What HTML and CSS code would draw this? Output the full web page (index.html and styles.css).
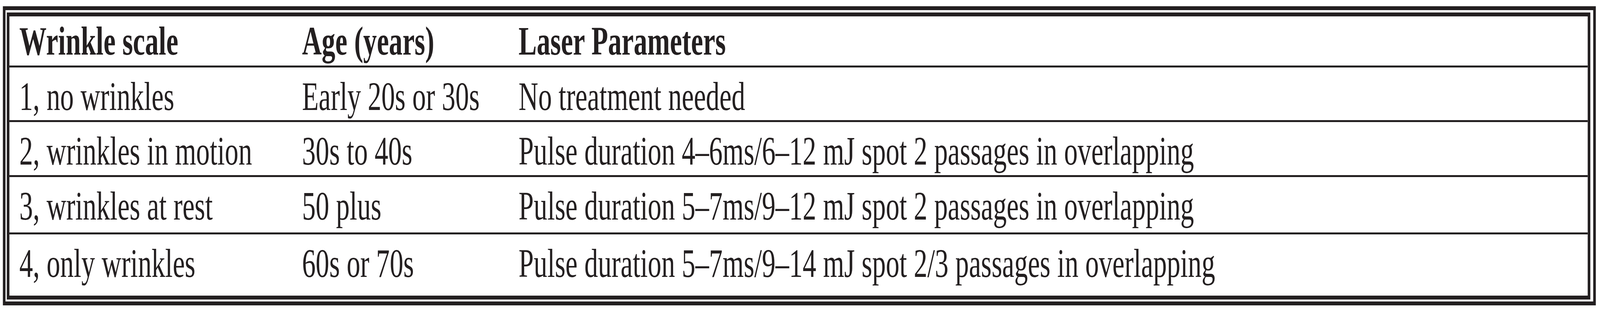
FILE: index.html
```html
<!DOCTYPE html>
<html lang="en">
<head>
<meta charset="utf-8">
<title>Wrinkle scale</title>
<link rel="stylesheet" href="styles.css">
</head>
<body>
<div class="viewport">
  <div class="page">
    <div class="frame">
      <div class="table">
        <div class="row head">
          <div class="cell">Wrinkle scale</div>
          <div class="cell">Age (years)</div>
          <div class="cell">Laser Parameters</div>
        </div>
        <div class="row r1">
          <div class="cell">1, no wrinkles</div>
          <div class="cell">Early 20s or 30s</div>
          <div class="cell">No treatment needed</div>
        </div>
        <div class="row r2">
          <div class="cell">2, wrinkles in motion</div>
          <div class="cell">30s to 40s</div>
          <div class="cell">Pulse duration 4–6ms/6–12 mJ spot 2 passages in overlapping</div>
        </div>
        <div class="row r3">
          <div class="cell">3, wrinkles at rest</div>
          <div class="cell">50 plus</div>
          <div class="cell">Pulse duration 5–7ms/9–12 mJ spot 2 passages in overlapping</div>
        </div>
        <div class="row r4">
          <div class="cell">4, only wrinkles</div>
          <div class="cell">60s or 70s</div>
          <div class="cell">Pulse duration 5–7ms/9–14 mJ spot 2/3 passages in overlapping</div>
        </div>
      </div>
    </div>
  </div>
</div>
</body>
</html>
```
FILE: styles.css
```css
html, body {
  margin: 0;
  padding: 0;
  background: #ffffff;
}
body {
  font-family: "Liberation Serif", "Times New Roman", serif;
  font-size: 104px;
  line-height: 115px;
  color: #231f20;
}
.viewport {
  width: 100%;
  height: 800px;
  overflow: hidden;
}
.page {
  width: 6118px;
  padding-top: 16px;
  transform-origin: 0 0;
}
@media (max-width: 6117px) {
  .page {
    transform: scaleX(0.66950);
  }
}
.frame {
  box-sizing: border-box;
  width: 6091px;
  margin-left: 11px;
  border: 10px solid #231f20;
  padding: 6px 11px 5px 5px;
}
.table {
  box-sizing: border-box;
  width: 6055px;
  border: 10px solid #231f20;
}
.row {
  display: grid;
  grid-template-columns: 1081px 828px 1fr;
  padding-left: 38px;
  box-sizing: border-box;
  border-top: 5px solid #231f20;
  padding-top: 16px;
  white-space: nowrap;
}
.row.head {
  border-top: none;
  padding-top: 5px;
  height: 126px;
  font-weight: bold;
}
.row.r1 { height: 140px; }
.row.r2 { height: 141px; }
.row.r3 { height: 147px; }
.row.r4 { height: 162px; }
```
